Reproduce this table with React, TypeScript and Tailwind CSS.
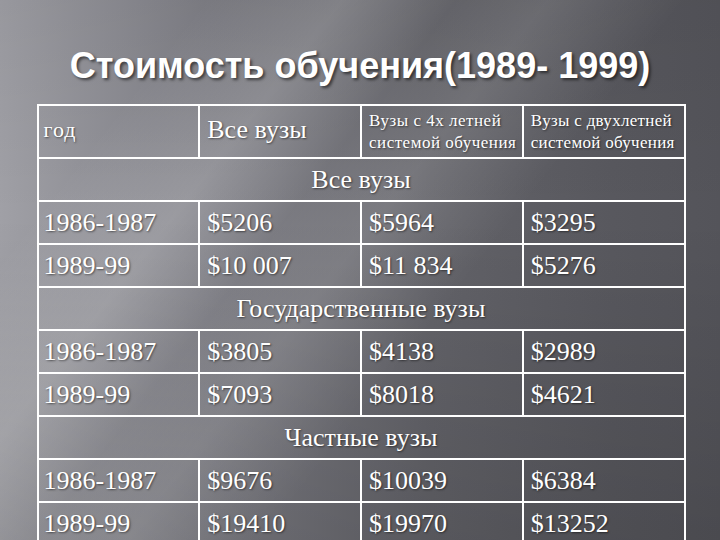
const sections = [
  {
    title: "Все вузы",
    rows: [
      ["1986-1987", "$5206", "$5964", "$3295"],
      ["1989-99", "$10 007", "$11 834", "$5276"],
    ],
  },
  {
    title: "Государственные вузы",
    rows: [
      ["1986-1987", "$3805", "$4138", "$2989"],
      ["1989-99", "$7093", "$8018", "$4621"],
    ],
  },
  {
    title: "Частные вузы",
    rows: [
      ["1986-1987", "$9676", "$10039", "$6384"],
      ["1989-99", "$19410", "$19970", "$13252"],
    ],
  },
];

const cell = "border-2 border-white px-[5px] align-middle";

const App = () => {
  return (
    <div className="relative w-[720px] h-[540px] overflow-hidden bg-[linear-gradient(90deg,#a0a0a6_0%,#7e7e85_30%,#636369_60%,#58585e_85%,#54545a_100%)] text-white">
      <div className="absolute inset-0 bg-[linear-gradient(128deg,rgba(255,255,255,0)_18%,rgba(255,255,255,0.18)_30%,rgba(255,255,255,0.04)_40%,rgba(255,255,255,0.12)_48%,rgba(255,255,255,0)_60%)]" />
      <div className="absolute inset-0 bg-[linear-gradient(180deg,rgba(0,0,0,0.05)_0%,rgba(0,0,0,0)_40%,rgba(0,0,0,0.12)_100%)]" />
      <div className="relative flex flex-col items-center">
        <h1 className="mt-[46px] h-[58px] font-['Liberation_Sans',Arial,sans-serif] font-bold text-[36px] leading-[40px] [text-shadow:2px_2px_3px_rgba(0,0,0,0.55)]">
          Стоимость обучения(1989- 1999)
        </h1>
        <table className="ml-[2px] w-[649px] table-fixed border-collapse font-['Liberation_Serif','Times_New_Roman',serif] [text-shadow:1px_1px_2px_rgba(0,0,0,0.5)]">
          <tbody>
            <tr className="h-[53px]">
              <td className={`${cell} text-[22px] tracking-[1px] pb-[4px]`}>год</td>
              <td className={`${cell} text-[26px] pl-[7px] pb-[4px]`}>Все вузы</td>
              <td className={`${cell} text-[17px] leading-[22px] tracking-[0.5px] pl-[7px]`}>
                Вузы с 4х летней
                <br />
                системой обучения
              </td>
              <td className={`${cell} text-[17px] leading-[22px] tracking-[0.3px] pl-[7px]`}>
                Вузы с двухлетней
                <br />
                системой обучения
              </td>
            </tr>
            {sections.map((section, si) => (
              <>
                <tr key={`s${si}`} className="h-[43px]">
                  <td colSpan={4} className={`${cell} text-center text-[26px]`}>
                    {section.title}
                  </td>
                </tr>
                {section.rows.map((row, ri) => (
                  <tr key={`r${si}-${ri}`} className="h-[43px]">
                    {row.map((value, ci) => (
                      <td
                        key={ci}
                        className={`${cell} text-[26px] ${ci > 0 ? "pl-[7px]" : ""}`}
                      >
                        {value}
                      </td>
                    ))}
                  </tr>
                ))}
              </>
            ))}
          </tbody>
        </table>
      </div>
    </div>
  );
};

export default App;
